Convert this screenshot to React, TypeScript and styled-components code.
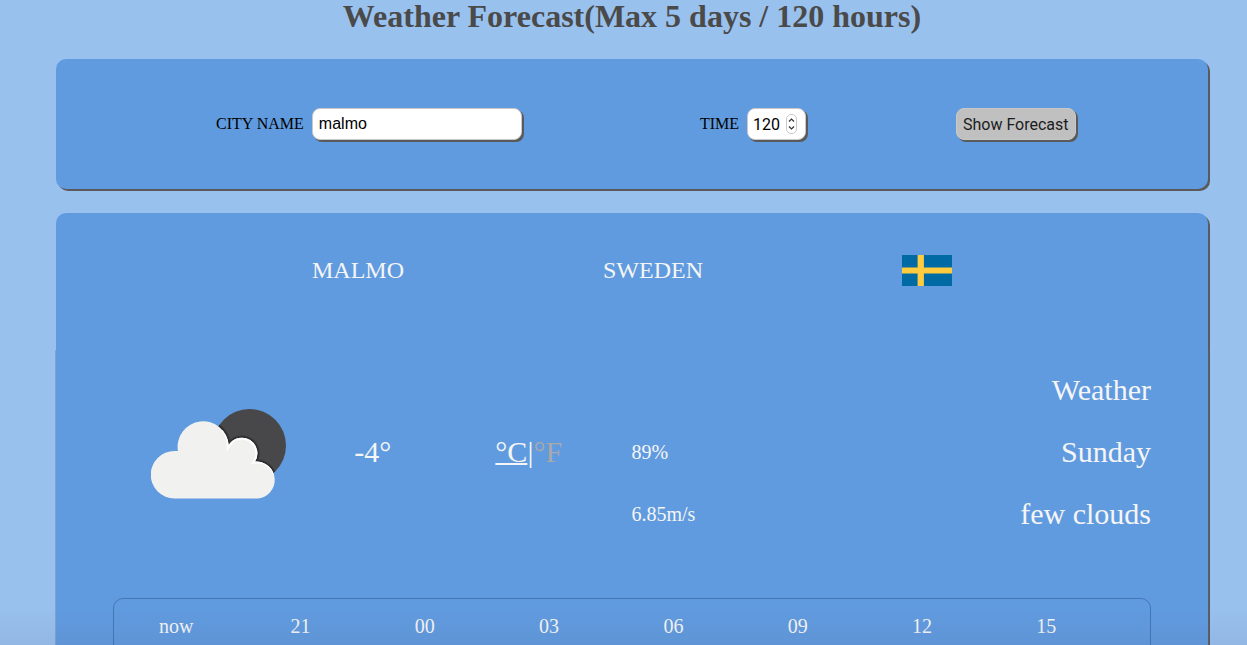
import React, { useState } from "react";
import styled, { createGlobalStyle, css } from "styled-components";

const GlobalStyle = createGlobalStyle`
  * { box-sizing: border-box; }
  html { scrollbar-width: none; background: #99c1ee; }
  body {
    margin: 0;
    font-family: "Liberation Serif", "Times New Roman", serif;
    font-size: 16px;
    color: #000;
  }
`;

const Page = styled.main`
  padding: 0 39px 40px 56px;
`;

const Title = styled.h1`
  margin: 0 0 27px;
  font-size: 32px;
  line-height: 32px;
  text-align: center;
  color: #4a4a4a;
`;

const raised = css`
  box-shadow: 2px 2px #5a5a5a;
`;

const SearchForm = styled.form`
  display: grid;
  grid-template-columns: 484fr 256fr 252fr;
  align-items: center;
  margin-bottom: 24px;
  padding: 49px 0 49px 160px;
  border-radius: 10px;
  background: #619bdf;
  ${raised}
`;

const Field = styled.div`
  display: flex;
  align-items: center;
  gap: 8px;
`;

const control = css`
  height: 32px;
  border: 1px solid #c8c8c8;
  border-radius: 8px;
  font-family: "Liberation Sans", Arial, sans-serif;
  font-size: 16px;
  ${raised}
`;

const CityInput = styled.input`
  ${control}
  width: 210px;
  padding: 0 6px;
  background: #fff;
  color: #000;
`;

const TimeBox = styled.div`
  ${control}
  display: flex;
  align-items: center;
  width: 59px;
  padding: 0 8px 0 5px;
  background: #fff;
`;

const TimeInput = styled.input`
  flex: 1;
  min-width: 0;
  padding: 0;
  border: 0;
  outline: 0;
  background: transparent;
  font-family: Roboto, "Liberation Sans", sans-serif;
  font-size: 16px;
  color: #000;
  appearance: textfield;
  &::-webkit-inner-spin-button { appearance: none; margin: 0; }
`;

const Stepper = styled.svg`
  flex: none;
  display: block;
`;

const Submit = styled.button`
  ${control}
  justify-self: start;
  padding: 0 6px;
  background: #c0c0c0;
  font-family: Roboto, "Liberation Sans", sans-serif;
  color: #1c1c1c;
`;

const Forecast = styled.section`
  border-radius: 10px;
  background: #619bdf;
  color: #f5f5f5;
  ${raised}
`;

const Place = styled.header`
  display: flex;
  justify-content: space-evenly;
  align-items: center;
  padding: 42px 57px 63px;
  font-size: 24px;
  line-height: 31px;
`;

const Details = styled.div`
  padding: 10px 57px 40px;
  box-shadow: -1px 1px rgba(90, 110, 140, 0.35), 1px 1px rgba(90, 110, 140, 0.35);
`;

const Current = styled.div`
  display: grid;
  grid-template-columns: 241fr 141fr 136fr 519fr;
  align-items: center;
  margin-bottom: 53px;
  font-size: 30px;
  line-height: 62px;
`;

const ConditionIcon = styled.svg`
  display: block;
  margin: 4px 0 0 38px;
`;

const UnitLink = styled.a<{ $active?: boolean }>`
  color: ${(p) => (p.$active ? "#f5f5f5" : "#a9a9a9")};
  text-decoration: ${(p) => (p.$active ? "underline" : "none")};
  text-decoration-thickness: 2px;
  text-decoration-skip-ink: none;
`;

const Lines = styled.div`
  display: flex;
  justify-content: space-between;
`;

const Stats = styled.div`
  padding-top: 62px;
  font-size: 20px;
`;

const Summary = styled.div`
  text-align: right;
`;

const Hours = styled.ul`
  display: flex;
  margin: 0;
  padding: 11px 0 100px;
  border: 1px solid #4377b5;
  border-radius: 10px;
  list-style: none;
`;

const Hour = styled.li`
  width: 12%;
  font-size: 20px;
  line-height: 32px;
  text-align: center;
`;

const BottomShade = styled.div`
  position: fixed;
  inset: auto 0 0;
  height: 36px;
  background: linear-gradient(rgba(70, 80, 110, 0), rgba(70, 80, 110, 0.08));
  pointer-events: none;
`;

const CLOUD =
  "M23.5 89.5A23.7 23.7 0 0 1 23.5 42H26.9A25.6 25.6 0 1 1 77.7 36A15 15 0 0 1 104 52.5A18.5 18.5 0 0 1 106.4 89.5Z";

function FewClouds() {
  return (
    <ConditionIcon width="136" height="90" viewBox="0 0 136 90" role="img" aria-label="few clouds">
      <defs>
        <clipPath id="moon"><circle cx="98.5" cy="36.5" r="36.5" /></clipPath>
        <clipPath id="cloud"><path d={CLOUD} /></clipPath>
      </defs>
      <circle cx="98.5" cy="36.5" r="36.5" fill="#48484a" />
      <g clipPath="url(#moon)">
        <path d={CLOUD} fill="none" stroke="#3c3c3e" strokeWidth="5" />
        <path d={CLOUD} fill="none" stroke="#2c2c2e" strokeWidth="3" />
      </g>
      <path d={CLOUD} fill="#f1f1f0" />
      <g clipPath="url(#cloud)">
        <path
          d="M72 20A25.6 25.6 0 0 1 77.7 36A15 15 0 0 1 104 52.5A18.5 18.5 0 0 1 124 65"
          fill="none" stroke="#fff" strokeWidth="4"
        />
      </g>
    </ConditionIcon>
  );
}

function SwedishFlag() {
  return (
    <svg width="50" height="31" viewBox="0 0 50 31" role="img" aria-label="Flag of Sweden">
      <path fill="#006aa4" d="M0 0h50v31H0z" />
      <path fill="#ffcb3f" d="M15.6 0h6.3v31h-6.3zM0 12.5h50v6H0z" />
    </svg>
  );
}

const hours = ["now", "21", "00", "03", "06", "09", "12", "15"];

export default function App() {
  const [city, setCity] = useState("malmo");
  const [time, setTime] = useState("120");

  return (
    <>
      <GlobalStyle />
      <Page>
        <Title>Weather Forecast(Max 5 days / 120 hours)</Title>
        <SearchForm onSubmit={(e) => e.preventDefault()}>
          <Field>
            <label htmlFor="city">CITY NAME</label>
            <CityInput id="city" value={city} onChange={(e) => setCity(e.target.value)} />
          </Field>
          <Field>
            <label htmlFor="time">TIME</label>
            <TimeBox>
              <TimeInput
                id="time" type="number" min="0" max="120"
                value={time} onChange={(e) => setTime(e.target.value)}
              />
              <Stepper width="11" height="20" viewBox="0 0 11 20" fill="none" aria-hidden="true">
                <rect x="0.5" y="0.5" width="10" height="19" rx="4.5" stroke="#c9c9c9" />
                <path d="M3 7.5l2.5-2.5L8 7.5M3 12.5L5.5 15 8 12.5" stroke="#333" strokeWidth="1.2" />
              </Stepper>
            </TimeBox>
          </Field>
          <Submit type="submit">Show Forecast</Submit>
        </SearchForm>
        <Forecast>
          <Place>
            <span>MALMO</span>
            <span>SWEDEN</span>
            <SwedishFlag />
          </Place>
          <Details>
            <Current>
              <FewClouds />
              <span>-4°</span>
              <span>
                <UnitLink href="#celsius" $active>°C</UnitLink>|<UnitLink href="#fahrenheit">°F</UnitLink>
              </span>
              <Lines>
                <Stats>
                  <div>89%</div>
                  <div>6.85m/s</div>
                </Stats>
                <Summary>
                  <div>Weather</div>
                  <div>Sunday</div>
                  <div>few clouds</div>
                </Summary>
              </Lines>
            </Current>
            <Hours>
              {hours.map((hour) => (
                <Hour key={hour}>{hour}</Hour>
              ))}
            </Hours>
          </Details>
        </Forecast>
      </Page>
      <BottomShade />
    </>
  );
}
